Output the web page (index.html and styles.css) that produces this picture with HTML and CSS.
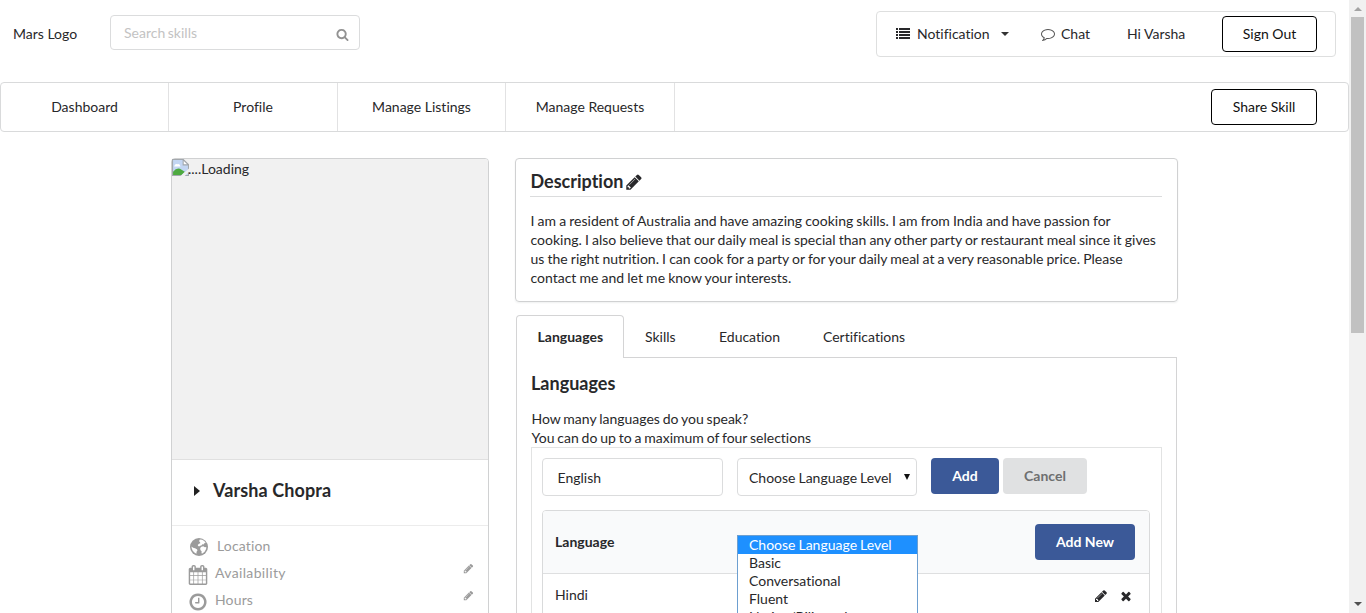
FILE: index.html
```html
<!DOCTYPE html>
<html lang="en">
<head>
<meta charset="utf-8">
<title>Profile</title>
<link rel="stylesheet" href="styles.css">
</head>
<body>
<svg class="defs" width="0" height="0">
  <symbol id="search" viewBox="0 0 1792 1792"><path d="M1216 832q0-185-131.500-316.500t-316.500-131.500-316.500 131.500-131.500 316.500 131.500 316.500 316.500 131.500 316.500-131.500 131.500-316.500zm512 832q0 52-38 90t-90 38q-54 0-90-38l-343-342q-179 124-399 124-143 0-273.500-55.500t-225-150-150-225-55.500-273.500 55.500-273.500 150-225 225-150 273.500-55.500 273.500 55.500 225 150 150 225 55.500 273.500q0 220-124 399l343 343q37 37 37 90z"/></symbol>
  <symbol id="pencil" viewBox="0 0 1792 1792"><path d="M491 1536l91-91-235-235-91 91v107h128v128h107zm523-928q0-22-22-22-10 0-17 7l-542 542q-7 7-7 17 0 22 22 22 10 0 17-7l542-542q7-7 7-17zm-54-192l416 416-832 832h-416v-416zm683 96q0 53-37 90l-166 166-416-416 166-165q36-38 90-38 53 0 91 38l235 234q37 39 37 91z"/></symbol>
  <symbol id="times" viewBox="0 0 1792 1792"><path d="M1490 1322q0 40-28 68l-136 136q-28 28-68 28t-68-28l-294-294-294 294q-28 28-68 28t-68-28l-136-136q-28-28-28-68t28-68l294-294-294-294q-28-28-28-68t28-68l136-136q28-28 68-28t68 28l294 294 294-294q28-28 68-28t68 28l136 136q28 28 28 68t-28 68l-294 294 294 294q28 28 28 68z"/></symbol>
  <symbol id="comment" viewBox="0 0 1792 1792"><path d="M896 384q-204 0-381.500 69.500t-282 187.500-104.500 255q0 112 71.500 213.500t201.500 175.500l87 50-27 96q-24 91-70 172 152-63 275-171l43-38 57 6q69 8 130 8 204 0 381.500-69.500t282-187.500 104.500-255-104.500-255-282-187.500-381.500-69.500zm896 512q0 174-120 321.500t-326 233-450 85.500q-70 0-145-8-198 175-460 242-49 14-114 22h-5q-15 0-27-10.500t-16-27.500v-1q-3-4-.5-12t2-10 4.500-9.500l6-9 7-8.500 8-9q7-8 31-34.500t34.500-38 31-39.500 32.500-51 27-59 26-76q-157-89-247.500-220t-90.500-281q0-174 120-321.500t326-233 450-85.500 450 85.500 326 233 120 321.500z"/></symbol>
  <symbol id="clock" viewBox="0 0 1792 1792"><path d="M1024 544v448q0 14-9 23t-23 9h-320q-14 0-23-9t-9-23v-64q0-14 9-23t23-9h224v-352q0-14 9-23t23-9h64q14 0 23 9t9 23zm416 352q0-148-73-273t-198-198-273-73-273 73-198 198-73 273 73 273 198 198 273 73 273-73 198-198 73-273zm224 0q0 209-103 385.500t-279.500 279.500-385.500 103-385.500-103-279.500-279.500-103-385.500 103-385.500 279.500-279.500 385.500-103 385.500 103 279.500 279.500 103 385.500z"/></symbol>
  <symbol id="calendar" viewBox="0 0 1792 1792"><path d="M192 1664h288v-288h-288v288zm352 0h320v-288h-320v288zm-352-352h288v-320h-288v320zm352 0h320v-320h-320v320zm-352-384h288v-288h-288v288zm736 736h320v-288h-320v288zm-384-736h320v-288h-320v288zm768 736h288v-288h-288v288zm-384-352h320v-320h-320v320zm-352-864v-288q0-13-9.500-22.500t-22.500-9.500h-64q-13 0-22.500 9.500t-9.500 22.500v288q0 13 9.500 22.500t22.500 9.500h64q13 0 22.500-9.500t9.500-22.500zm736 864h288v-320h-288v320zm-384-384h320v-288h-320v288zm384 0h288v-288h-288v288zm32-480v-288q0-13-9.500-22.500t-22.500-9.500h-64q-13 0-22.500 9.500t-9.500 22.500v288q0 13 9.500 22.500t22.500 9.500h64q13 0 22.500-9.500t9.500-22.500zm384-64v1280q0 52-38 90t-90 38h-1408q-52 0-90-38t-38-90v-1280q0-52 38-90t90-38h128v-96q0-66 47-113t113-47h64q66 0 113 47t47 113v96h384v-96q0-66 47-113t113-47h64q66 0 113 47t47 113v96h128q52 0 90 38t38 90z"/></symbol>
  <symbol id="list" viewBox="0 0 14 12"><path d="M0 0h2v2H0zM3 0h11v2H3zM0 3h2v2H0zM3 3h11v2H3zM0 6h2v2H0zM3 6h11v2H3zM0 9h2v2H0zM3 9h11v2H3z"/></symbol>
  <symbol id="globe" viewBox="0 0 18 18"><circle cx="9" cy="9" r="9"/><path fill="#fff" d="M9.800 1.500l2.500.3 2.200 1.500 1.200 1.700-1.400.3-.8 1.100-1.200-.1-.9 1.300-1.300.1-1 .8-.9-.4-.5-1.200 1.300-1.200 1.300-.4-.3-1.300-1-.7zM11.400 8.700l1.900-.4 1.500.9 1.500-.3-.2 2.200-1.500 2.700-2.100 1.700-1.100-.3.300-1.700-1.300-1.600-.2-1.800zM1.500 8.500l1.600 1.200 1.900.5 1.900 1.100.6 1-.9 1.500-.2 1.900-1.700-1-2-2-1-2.400z"/></symbol>
</svg>

<div class="window">
  <div class="page">
    <header class="top">
      <div class="brand">Mars Logo</div>
      <div class="search"><span>Search skills</span><svg><use href="#search"/></svg></div>
      <div class="account">
        <svg class="i-list"><use href="#list"/></svg><span class="t-notif">Notification</span><i class="caret"></i>
        <svg class="i-chat"><use href="#comment"/></svg><span class="t-chat">Chat</span>
        <span class="t-hi">Hi Varsha</span>
        <a class="outline signout">Sign Out</a>
      </div>
    </header>
    <nav class="nav">
      <a class="item narrow">Dashboard</a><a class="item">Profile</a><a class="item narrow">Manage Listings</a><a class="item">Manage Requests</a>
      <a class="outline share">Share Skill</a>
    </nav>
    <main class="main">
      <aside class="card">
        <div class="photo">
          <svg class="broken" viewBox="0 0 16 16"><path fill="#c3d6f3" stroke="#a3a8ad" d="M.5.500h10l5 5v10H.5z"/><path fill="#fff" d="M2 7q1-3 3-2 2-1 3 2z"/><path fill="#4eaa40" d="M1 15v-3q4-5 8-2l3 2-3 3z"/><path fill="#f0f0f0" d="M8 16l8-7v3l-4 4z"/><path fill="#fff" stroke="#a3a8ad" d="M10.500.500v5h5z"/></svg><span>....Loading</span>
        </div>
        <div class="person"><i class="tri"></i><span>Varsha Chopra</span></div>
        <div class="facts">
          <div class="fact loc"><svg class="i-globe"><use href="#globe"/></svg><span>Location</span></div>
          <div class="fact"><svg class="i-cal"><use href="#calendar"/></svg><span class="wide">Availability</span><svg class="edit"><use href="#pencil"/></svg></div>
          <div class="fact"><svg class="i-clock"><use href="#clock"/></svg><span>Hours</span><svg class="edit"><use href="#pencil"/></svg></div>
        </div>
      </aside>
      <div class="content">
        <section class="desc">
          <h3><span>Description</span><svg><use href="#pencil"/></svg></h3>
          <p><span>I am a resident of Australia and have amazing cooking skills. I am from India and have passion for</span><br><span>cooking. I also believe that our daily meal is special than any other party or restaurant meal since it gives</span><br><span>us the right nutrition. I can cook for a party or for your daily meal at a very reasonable price. Please</span><br><span>contact me and let me know your interests.</span></p>
        </section>
        <div class="tabs"><a class="tab active">Languages</a><a class="tab skills">Skills</a><a class="tab edu">Education</a><a class="tab cert">Certifications</a></div>
        <section class="panel">
          <h3>Languages</h3>
          <p class="hint">How many languages do you speak?<br>You can do up to a maximum of four selections</p>
          <div class="editor">
            <div class="form">
              <div class="input">English</div>
              <div class="select"><span>Choose Language Level</span><i class="arrow"></i>
                <div class="menu"><div class="opt on">Choose Language Level</div><div class="opt">Basic</div><div class="opt">Conversational</div><div class="opt">Fluent</div><div class="opt">Native/Bilingual</div></div>
              </div>
              <a class="btn add">Add</a><a class="btn cancel">Cancel</a>
            </div>
            <div class="table">
              <div class="thead"><b>Language</b><a class="btn new">Add New</a></div>
              <div class="row"><span>Hindi</span><svg class="r-edit"><use href="#pencil"/></svg><svg class="r-del"><use href="#times"/></svg></div>
            </div>
          </div>
        </section>
      </div>
    </main>
  </div>
  <div class="scrollbar"><i class="up"></i><div class="thumb"></div><i class="down"></i></div>
</div>
</body>
</html>
```

FILE: styles.css
```css
* { box-sizing: border-box; }
body { margin: 0; font: 14px/19px Lato, "Liberation Sans", sans-serif; font-variant-ligatures: none; color: #28282a; overflow: hidden; background: #fff; }
svg { display: block; flex: none; fill: currentColor; }
.defs { position: absolute; }
a, span, b { white-space: nowrap; }
.window { display: flex; width: 1366px; height: 613px; overflow: hidden; }
.page { width: 1349px; height: 613px; overflow: hidden; }

.top { display: flex; height: 82px; padding: 11px 13px 0; }
.brand { width: 97px; padding-top: 13px; }
.search { display: flex; justify-content: space-between; width: 250px; height: 35px; margin-top: 4px; padding: 7px 10px 0 13px; border: 1px solid #dbdcdd; border-radius: 4px; color: #c3c3c3; word-spacing: -1px; }
.search svg { width: 13px; height: 13px; margin-top: 5px; color: #929292; }
.account { display: flex; align-items: center; width: 460px; height: 46px; margin-left: auto; padding-left: 19px; border: 1px solid #dedfdf; border-radius: 4px; }
.account span { padding-bottom: 2px; }
.i-list { width: 14px; height: 12px; }
.t-notif { width: 72px; margin-left: 7px; }
.caret { margin-left: 12px; border: 4px solid transparent; border-top-color: #333; border-bottom: 0; }
.i-chat { width: 14px; height: 14px; margin-left: 32px; color: #555; }
.t-chat { width: 31px; margin-left: 6px; }
.t-hi { width: 59px; margin-left: 35px; }
.outline { display: flex; align-items: center; justify-content: center; height: 36px; padding-bottom: 2px; border: 1px solid #000; border-radius: 4px; color: #111; }
.signout { width: 95px; margin-left: 36px; }

.nav { display: flex; align-items: center; height: 50px; border: 1px solid #d9dadb; border-radius: 4px; }
.item { display: flex; align-items: center; justify-content: center; width: 169px; height: 48px; padding-bottom: 2px; border-right: 1px solid #e2e2e3; }
.narrow { width: 168px; }
.share { width: 106px; margin: 0 31px 0 auto; }

.main { display: flex; gap: 26px; padding: 26px 0 0 171px; }
.card { width: 318px; height: 520px; border: 1px solid #d0d1d2; border-radius: 4px; }
.photo { display: flex; height: 301px; background: #f1f1f1; border-bottom: 1px solid #e0e0e0; border-radius: 3px 3px 0 0; }
.photo span { margin-left: -1px; }
.broken { width: 17px; height: 17px; }
.person { display: flex; align-items: center; height: 66px; padding: 0 0 4px 22px; border-bottom: 1px solid #ececec; font-size: 18px; font-weight: 700; letter-spacing: .1px; }
.tri { width: 0; margin-right: 13px; border: 5px solid transparent; border-left: 6px solid #222; border-right: 0; }
.facts { padding: 8px 14px 0 16px; color: #9b9b9b; }
.fact { display: flex; height: 27px; padding-top: 2px; letter-spacing: .15px; }
.fact span { margin-left: 7px; }
.fact .wide { letter-spacing: .35px; }
.fact.loc span { margin-left: 9px; }
.i-globe { width: 18px; height: 18px; margin: 2px 0 0 2px; }
.i-cal { width: 20px; height: 20px; margin-top: 2px; }
.i-clock { width: 20px; height: 20px; margin-top: 2px; }
.edit { width: 11px; height: 11px; margin: 0 0 0 auto; }

.content { width: 663px; }
.desc { height: 144px; padding: 12px 15px 0 14px; border: 1px solid #d0d1d2; border-radius: 4px; box-shadow: 0 1px 2px #22242612; }
h3 { margin: 0; font-size: 18px; font-weight: 700; line-height: 20px; }
.desc h3 { display: flex; height: 26px; padding-left: .5px; border-bottom: 1px solid #dbdcdd; }
.desc h3 svg { width: 18px; height: 18px; margin: 2px 0 0 2px; }
.desc p { margin: 14px 0 0 .5px; word-spacing: -.45px; }
.tabs { display: flex; height: 43px; margin: 13px 1px 0; position: relative; z-index: 1; }
.tab { padding-top: 12px; height: 42px; }
.active { width: 108px; height: 43px; padding: 11px 0 0 20.500px; border: 1px solid #d4d4d5; border-bottom: 0; border-radius: 4px 4px 0 0; background: #fff; font-weight: 700; }
.skills { width: 74px; padding-left: 21px; }
.edu { width: 104px; padding-left: 21px; }
.cert { padding-left: 21px; }
.panel { height: 300px; margin: -1px 1px 0; padding: 15px 14px; border: 1px solid #d4d4d5; }
.hint { margin: 16px 0 0 .5px; word-spacing: -.75px; }
.editor { height: 260px; border: 1px solid #e2e3e3; padding: 10px; }
.form { display: flex; height: 52px; }
.input { width: 181px; height: 38px; padding: 9px 14.500px; border: 1px solid #dbdcdd; border-radius: 4px; }
.select { display: flex; position: relative; width: 180px; height: 38px; margin: 0 14px; padding: 9px 0 0 11px; border: 1px solid #dbdcdd; border-radius: 4px; word-spacing: -.6px; }
.arrow { width: 0; height: 0; margin: 6px 0 0 12px; border: 3px solid transparent; border-top: 6px solid #111; border-bottom: 0; }
.menu { position: absolute; left: -1px; top: 76px; width: 181px; height: 110px; border: 1px solid #6d9fd0; background: #fff; z-index: 2; }
.opt { height: 18px; padding-left: 11px; line-height: 17px; }
.on { background: #1e90ff; color: #fff; }
.btn { display: flex; align-items: center; justify-content: center; height: 36px; padding-bottom: 2px; border-radius: 4px; background: #3b5998; color: #fff; font-weight: 700; }
.add { width: 68px; }
.cancel { width: 84px; margin-left: 4px; background: #e0e1e2; color: #6e6f70; }
.table { width: 608px; height: 150px; border: 1px solid #d9dadb; border-radius: 4px; }
.thead { display: flex; align-items: center; justify-content: space-between; height: 63px; padding: 0 14px 0 12px; border-bottom: 1px solid #dedfe0; border-radius: 3px 3px 0 0; background: #f9fafb; }
.thead b { padding-bottom: 2px; }
.new { width: 100px; }
.row { display: flex; align-items: center; height: 43px; padding: 0 16px 0 12px; }
.row span { padding-bottom: 2px; }
.r-edit { width: 14px; height: 14px; margin-left: auto; }
.r-del { width: 14px; height: 14px; margin-left: 11px; }

.scrollbar { width: 17px; height: 613px; background: #f1f1f1; display: flex; flex-direction: column; align-items: center; }
.up { margin: 7px 0 6px; border: 4px solid transparent; border-bottom-color: #a3a3a3; border-top: 0; }
.thumb { width: 13px; height: 316px; background: #c1c1c1; }
.down { margin: auto 0 7px; border: 4px solid transparent; border-top-color: #505050; border-bottom: 0; }
```
